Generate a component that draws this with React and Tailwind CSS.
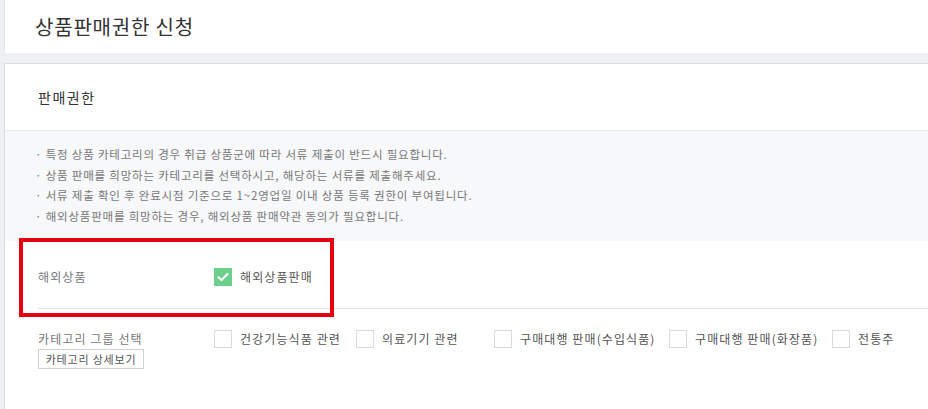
import React from 'react';

const notices = [
  '특정 상품 카테고리의 경우 취급 상품군에 따라 서류 제출이 반드시 필요합니다.',
  '상품 판매를 희망하는 카테고리를 선택하시고, 해당하는 서류를 제출해주세요.',
  '서류 제출 확인 후 완료시점 기준으로 1~2영업일 이내 상품 등록 권한이 부여됩니다.',
  '해외상품판매를 희망하는 경우, 해외상품 판매약관 동의가 필요합니다.',
];

const categories = [
  { label: '건강기능식품 관련', width: 'w-[142px]' },
  { label: '의료기기 관련', width: 'w-[138px]' },
  { label: '구매대행 판매(수입식품)', width: 'w-[175px]' },
  { label: '구매대행 판매(화장품)', width: 'w-[163px]' },
  { label: '전통주', width: 'w-[80px]' },
];

function Box({ checked }) {
  if (checked) {
    return (
      <span className="flex h-[18px] w-[18px] shrink-0 items-center justify-center bg-[#6ccf8b]">
        <svg width="12" height="10" viewBox="0 0 12 10" fill="none">
          <path d="M1.5 5.2 4.5 8 10.5 2" stroke="white" strokeWidth="2.2" strokeLinecap="round" strokeLinejoin="round" />
        </svg>
      </span>
    );
  }
  return <span className="h-[18px] w-[18px] shrink-0 border border-[#d9d9d9] bg-white" />;
}

export default function App() {
  return (
    <div className="relative flex h-[409px] w-full flex-col overflow-hidden bg-[#eef0f3] pl-1 font-['Noto_Sans_CJK_KR',sans-serif]">
      <div className="flex h-[53px] shrink-0 items-center border-l border-[#e1e4e8] bg-white pl-[30px]">
        <h1 className="text-[20px] font-normal leading-none tracking-[0.8px] text-[#333]">상품판매권한 신청</h1>
      </div>

      <div className="h-[10px] shrink-0" />

      <div className="flex-1 border-l border-t border-[#d8dbdf] bg-white">
        <div className="flex h-[67px] items-center border-b border-[#e6e7e9] pl-[33px] text-[14px] tracking-[1.5px] text-[#333]">
          판매권한
        </div>

        <div className="h-[110px] bg-[#f7f8fa] pl-[30px] pt-[13px]">
          {notices.map((t) => (
            <p key={t} className="text-[11.5px] leading-[20.7px] tracking-[0.8px] text-[#777]">
              · {t}
            </p>
          ))}
        </div>

        <div className="pl-[33px] tracking-[1.1px]">
          <div className="flex h-[68px] items-center border-b border-[#e4e4e4] text-[12px]">
            <span className="w-[176px] pt-[4px] text-[#777]">해외상품</span>
            <label className="flex items-center gap-[8px] pt-[4px] text-[#555]">
              <Box checked />
              해외상품판매
            </label>
          </div>

          <div className="flex pt-[21px] text-[12px]">
            <div className="w-[176px]">
              <p className="leading-[18px] text-[#777]">카테고리 그룹 선택</p>
              <button
                type="button"
                className="mt-[1px] h-[20px] w-[106px] border border-[#d2d2d2] bg-white text-[11px] leading-none tracking-[0.8px] text-[#555]"
              >
                카테고리 상세보기
              </button>
            </div>
            <div className="flex items-start">
              {categories.map((c) => (
                <label key={c.label} className={`flex items-center gap-[8px] whitespace-nowrap text-[#555] ${c.width}`}>
                  <Box />
                  {c.label}
                </label>
              ))}
            </div>
          </div>
        </div>
      </div>

      <div className="absolute left-[19px] top-[238px] h-[79px] w-[315px] border-4 border-[#e50012]" />
    </div>
  );
}
